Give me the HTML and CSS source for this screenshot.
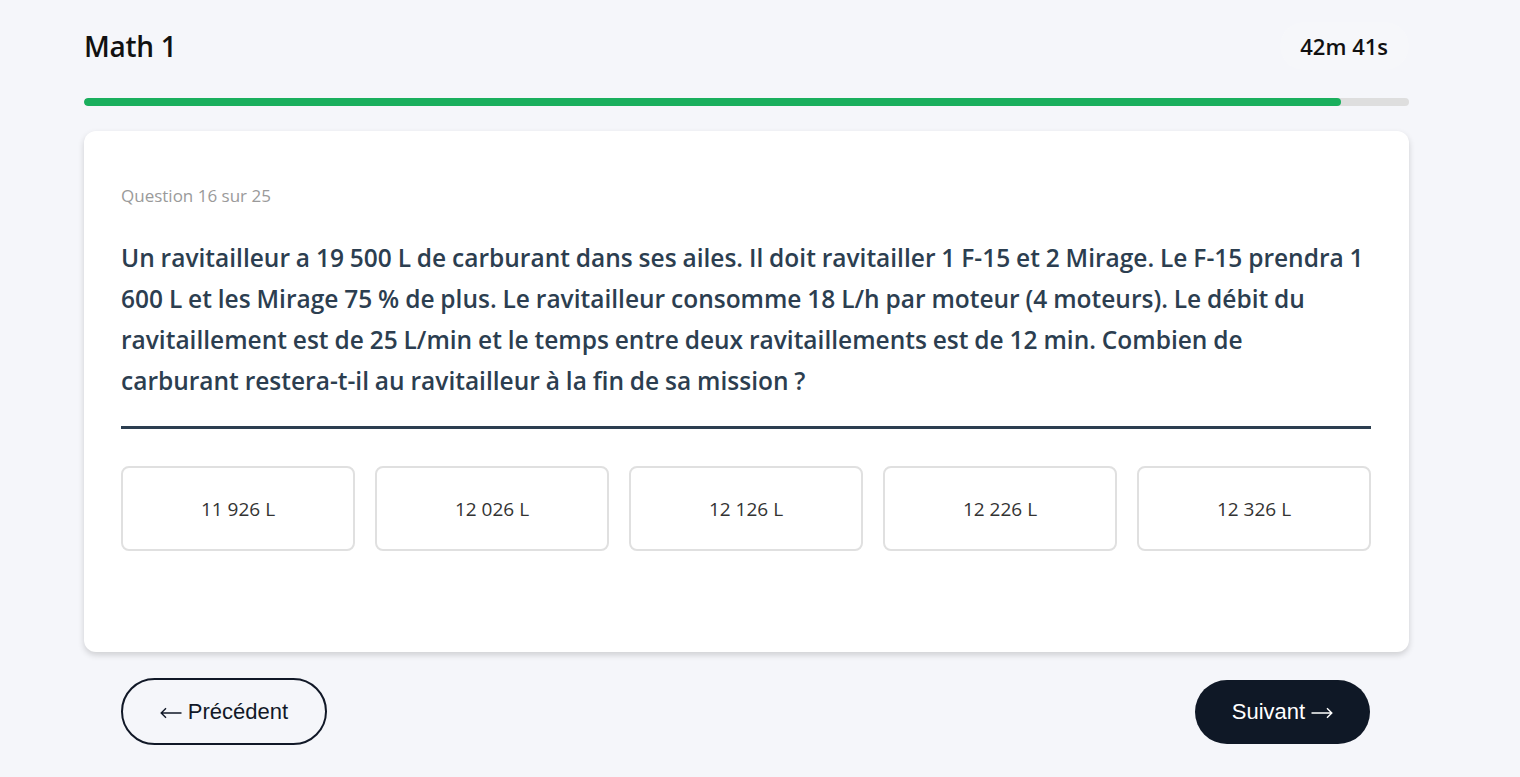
FILE: index.html
```html
<!DOCTYPE html>
<html lang="fr">
<head>
<meta charset="utf-8">
<title>Math 1</title>
<link rel="stylesheet" href="styles.css">
</head>
<body>
<div class="page">
  <header class="top">
    <h1 class="title">Math 1</h1>
    <div class="timer">42m 41s</div>
  </header>
  <div class="progress"><div class="progress-fill" style="width: 94.9%"></div></div>
  <section class="card">
    <div class="q-label">Question 16 sur 25</div>
    <p class="q-text">Un ravitailleur a 19 500 L de carburant dans ses ailes. Il doit ravitailler 1 F-15 et 2 Mirage. Le F-15 prendra 1 600 L et les Mirage 75 % de plus. Le ravitailleur consomme 18 L/h par moteur (4 moteurs). Le débit du ravitaillement est de 25 L/min et le temps entre deux ravitaillements est de 12 min. Combien de carburant restera-t-il au ravitailleur à la fin de sa mission ?</p>
    <div class="options">
      <button class="option">11 926 L</button>
      <button class="option">12 026 L</button>
      <button class="option">12 126 L</button>
      <button class="option">12 226 L</button>
      <button class="option">12 326 L</button>
    </div>
  </section>
  <nav class="nav">
    <button class="btn btn-prev"><svg class="arrow" width="22" height="12" viewBox="0 0 22 12" aria-hidden="true"><path d="M21.5 6H1.2M6 1.3 1.2 6 6 10.7" fill="none" stroke="currentColor" stroke-width="1.4"/></svg><span>Précédent</span></button>
    <button class="btn btn-next"><span>Suivant</span><svg class="arrow" width="22" height="12" viewBox="0 0 22 12" aria-hidden="true"><path d="M0.5 6H20.8M16 1.3 20.8 6 16 10.7" fill="none" stroke="currentColor" stroke-width="1.4"/></svg></button>
  </nav>
</div>
</body>
</html>
```

FILE: styles.css
```css
* { box-sizing: border-box; }
html, body { margin: 0; padding: 0; }
body {
  background: #f5f6fa;
  font-family: "Open Sans", "Noto Sans", sans-serif;
  color: #111;
}
.page {
  width: 1325px;
  margin-left: 84px;
  padding-top: 22px;
}
.top {
  display: flex;
  justify-content: space-between;
  align-items: center;
  height: 48px;
}
.title {
  margin: 0;
  font-size: 28px;
  font-weight: 600;
  color: #111;
  letter-spacing: -0.3px;
}
.timer {
  font-size: 22px;
  font-weight: 600;
  color: #111;
  background: rgba(255, 255, 255, 0.15);
  border-radius: 24px;
  padding: 0 21px 0 20px;
  height: 48px;
  line-height: 48px;
}
.progress {
  margin-top: 28px;
  height: 8px;
  background: #dedede;
  border-radius: 4px;
  overflow: hidden;
}
.progress-fill {
  height: 100%;
  background: #1aaf5d;
  border-radius: 4px;
}
.card {
  margin-top: 25px;
  background: #fff;
  border-radius: 12px;
  box-shadow: 0 3px 6px rgba(0,0,0,0.16);
  padding: 54px 38px 101px 37px;
}
.q-label {
  font-size: 17px;
  line-height: 22px;
  color: #9a9a9a;
}
.q-text {
  margin: 30px 0 0;
  font-size: 24.5px;
  word-spacing: -0.5px;
  line-height: 41px;
  font-weight: 600;
  color: #2c3e50;
  padding: 0 7px 25px 0;
  border-bottom: 3px solid #2c3e50;
}
.options {
  margin-top: 37px;
  display: grid;
  grid-template-columns: repeat(5, 1fr);
  gap: 20px;
}
.option {
  height: 85px;
  background: #fff;
  border: 2px solid #e0e0e0;
  border-radius: 8px;
  font-family: "Open Sans", "Noto Sans", sans-serif;
  font-size: 19px;
  color: #333;
  cursor: pointer;
}
.nav {
  display: flex;
  justify-content: space-between;
  align-items: center;
  padding: 26px 39px 0 37px;
}
.btn {
  display: flex;
  align-items: center;
  justify-content: center;
  gap: 6px;
  font-family: "Liberation Sans", Arial, sans-serif;
  font-size: 22px;
  border-radius: 34px;
  cursor: pointer;
  padding: 0;
}
.arrow { display: block; margin-top: 2px; }
.btn-prev {
  height: 67px;
  width: 206px;
  background: transparent;
  border: 2px solid #111827;
  color: #111827;
}
.btn-next {
  height: 64px;
  width: 175px;
  background: #0f1826;
  border: none;
  color: #fff;
}
```
